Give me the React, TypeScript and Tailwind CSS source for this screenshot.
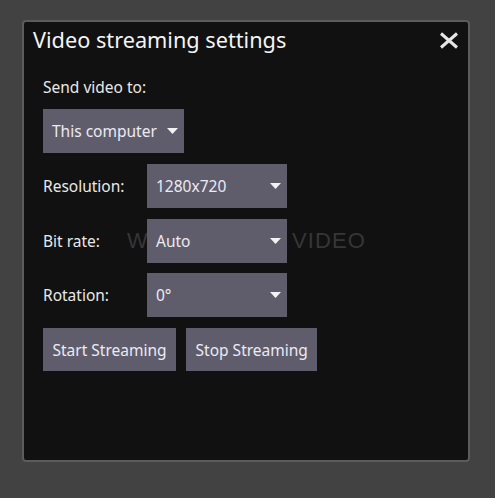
import React from "react";

function Caret() {
  return (
    <svg width="11" height="6" viewBox="0 0 11 6" className="shrink-0">
      <polygon points="0,0 11,0 5.5,6" fill="#f2f2f2" />
    </svg>
  );
}

function Select({ value, wide }: { value: string; wide?: boolean }) {
  return (
    <div
      className={
        wide
          ? "flex h-[44px] w-[140px] items-center justify-between bg-[#5f5d6c] pl-[9px] pr-[6px]"
          : "flex h-[44px] items-center bg-[#5f5d6c] pl-[9px] pr-[6px]"
      }
    >
      <span className="text-[15.5px] leading-[20px] text-[#eceaf2]">{value}</span>
      <span className={wide ? "" : "ml-[10px]"}>
        <Caret />
      </span>
    </div>
  );
}

function Row({ label, value, className }: { label: string; value: string; className: string }) {
  return (
    <div className={"flex items-center " + className}>
      <div className="w-[104px] text-[15.5px] leading-[20px] text-[#e8e8e8]">{label}</div>
      <Select value={value} wide />
    </div>
  );
}

export default function App() {
  return (
    <div
      className="h-[498px] w-[495px] bg-[#424242] pl-[22px] pt-[20px]"
      style={{ fontFamily: '"Noto Sans", "Open Sans", sans-serif' }}
    >
      <div className="relative h-[442px] w-[448px] rounded-[4px] border-2 border-[#5c5c5c] bg-[#111111]">
        <div
          className="pointer-events-none absolute inset-x-0 top-[208px] pl-[1px] text-center text-[22px] leading-[22px] tracking-[1.1px] text-[#363636]"
          style={{ fontFamily: '"Liberation Sans", Arial, sans-serif' }}
        >
          WAITING FOR VIDEO
        </div>
        <div className="relative flex items-center justify-between pl-[9px] pr-[9px] pt-[3px]">
          <div className="text-[21.7px] leading-[30px] text-[#f4f4f4]">Video streaming settings</div>
          <svg width="20" height="17" viewBox="0 0 20 17">
            <line x1="2" y1="1.5" x2="18" y2="15.5" stroke="#e6e6e6" strokeWidth="3" />
            <line x1="18" y1="1.5" x2="2" y2="15.5" stroke="#e6e6e6" strokeWidth="3" />
          </svg>
        </div>
        <div className="relative flex flex-col items-start pl-[19px]">
          <div className="mt-[22px] text-[15.5px] leading-[20px] text-[#e8e8e8]">Send video to:</div>
          <div className="mt-[12px]">
            <Select value="This computer" />
          </div>
          <Row label="Resolution:" value="1280x720" className="mt-[11px]" />
          <Row label="Bit rate:" value="Auto" className="mt-[11px]" />
          <Row label="Rotation:" value="0°" className="mt-[10px]" />
          <div className="mt-[11px] flex gap-[10px]">
            <button className="h-[43px] bg-[#5f5d6c] px-[9.5px] text-[15.5px] leading-[20px] text-[#eceaf2]">
              Start Streaming
            </button>
            <button className="h-[43px] bg-[#5f5d6c] px-[9.5px] text-[15.5px] leading-[20px] text-[#eceaf2]">
              Stop Streaming
            </button>
          </div>
        </div>
      </div>
    </div>
  );
}
